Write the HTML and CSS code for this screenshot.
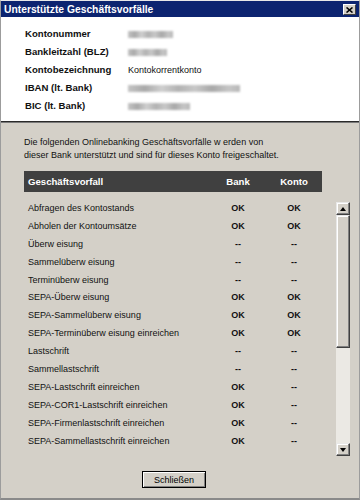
FILE: index.html
```html
<!DOCTYPE html>
<html lang="de">
<head>
<meta charset="utf-8">
<title>Unterstützte Geschäftsvorfälle</title>
<link rel="stylesheet" href="styles.css">
</head>
<body>
<div class="window">
  <div class="titlebar">
    <span class="title">Unterstützte Geschäftsvorfälle</span>
    <span class="close">
      <svg width="7" height="6" viewBox="0 0 7 6"><path d="M0.5 0.5 L6.5 5.5 M6.5 0.5 L0.5 5.5" stroke="#000" stroke-width="1.6" fill="none"/></svg>
    </span>
  </div>
  <div class="info">
    <div class="irow"><span class="label">Kontonummer</span><span class="blur w45"></span></div>
    <div class="irow"><span class="label">Bankleitzahl (BLZ)</span><span class="blur w39"></span></div>
    <div class="irow"><span class="label">Kontobezeichnung</span><span class="value">Kontokorrentkonto</span></div>
    <div class="irow"><span class="label">IBAN (lt. Bank)</span><span class="blur w112"></span></div>
    <div class="irow"><span class="label">BIC (lt. Bank)</span><span class="blur w62"></span></div>
  </div>
  <div class="content">
    <p class="desc">Die folgenden Onlinebanking Geschäftsvorfälle w erden von<br>dieser Bank unterstützt und sind für dieses Konto freigeschaltet.</p>
    <div class="thead">
      <span>Geschäftsvorfall</span><span class="c">Bank</span><span class="c">Konto</span>
    </div>
    <div class="listarea">
      <div class="rows">
        <div class="row"><span>Abfragen des Kontostands</span><b>OK</b><b>OK</b></div>
        <div class="row"><span>Abholen der Kontoumsätze</span><b>OK</b><b>OK</b></div>
        <div class="row"><span>Überw eisung</span><b>--</b><b>--</b></div>
        <div class="row"><span>Sammelüberw eisung</span><b>--</b><b>--</b></div>
        <div class="row"><span>Terminüberw eisung</span><b>--</b><b>--</b></div>
        <div class="row"><span>SEPA-Überw eisung</span><b>OK</b><b>OK</b></div>
        <div class="row"><span>SEPA-Sammelüberw eisung</span><b>OK</b><b>OK</b></div>
        <div class="row"><span>SEPA-Terminüberw eisung einreichen</span><b>OK</b><b>OK</b></div>
        <div class="row"><span>Lastschrift</span><b>--</b><b>--</b></div>
        <div class="row"><span>Sammellastschrift</span><b>--</b><b>--</b></div>
        <div class="row"><span>SEPA-Lastschrift einreichen</span><b>OK</b><b>--</b></div>
        <div class="row"><span>SEPA-COR1-Lastschrift einreichen</span><b>OK</b><b>--</b></div>
        <div class="row"><span>SEPA-Firmenlastschrift einreichen</span><b>OK</b><b>--</b></div>
        <div class="row"><span>SEPA-Sammellastschrift einreichen</span><b>OK</b><b>--</b></div>
      </div>
      <div class="scrollbar">
        <div class="sbtn"><span class="arrow up"></span></div>
        <div class="thumb"></div>
        <div class="track"></div>
        <div class="sbtn"><span class="arrow down"></span></div>
      </div>
    </div>
    <div class="btnrow"><span class="button">Schließen</span></div>
  </div>
</div>
</body>
</html>
```
FILE: styles.css
```css
html, body {
  margin: 0;
  padding: 0;
  background: #ffffff;
}
body {
  font-family: "Liberation Sans", Arial, sans-serif;
  color: #000;
}
.window {
  width: 360px;
  height: 500px;
  box-sizing: border-box;
  border-top: 1px solid #e8e8e8;
  border-left: 1px solid #9c9c9c;
  border-right: 1px solid #9c9c9c;
  border-bottom: 2px solid #8a8a8a;
  background: #d4d0c8;
  display: flex;
  flex-direction: column;
}
.titlebar {
  height: 16px;
  background: #0c2470;
  display: flex;
  align-items: center;
  justify-content: space-between;
  flex-shrink: 0;
}
.title {
  color: #fff;
  font-weight: bold;
  font-size: 10.3px;
  line-height: 14px;
  padding: 2px 0 0 3px;
}
.close {
  width: 13px;
  height: 11px;
  box-sizing: border-box;
  margin-right: 3px;
  margin-top: 1px;
  background: #d4d0c8;
  border: 1px solid;
  border-color: #fff #404040 #404040 #fff;
  display: flex;
  align-items: center;
  justify-content: center;
}
.close svg { display: block; }
.info {
  background: #fff;
  padding: 8px 0 6px 24px;
  border-bottom: 1px solid #2a2a2a;
  box-shadow: 0 1px 0 #7a7a7a;
  margin-bottom: 1px;
}
.irow {
  height: 18px;
  display: flex;
  align-items: center;
}
.label {
  width: 103px;
  font-weight: bold;
  font-size: 9.6px;
  line-height: 18px;
  color: #111;
}
.value {
  font-size: 9px;
  line-height: 18px;
  color: #111;
}
.blur {
  display: inline-block;
  height: 7px;
  background: linear-gradient(90deg, #c4c4c4 0%, #a9a9a9 15%, #cfcfcf 30%, #b2b2b2 45%, #c8c8c8 60%, #a8a8a8 75%, #c6c6c6 90%, #b8b8b8 100%);
  filter: blur(0.8px);
}
.w45 { width: 45px; }
.w39 { width: 39px; }
.w112 { width: 112px; }
.w62 { width: 62px; }
.content {
  padding: 13px 0 0 23px;
}
.desc {
  margin: 0;
  font-size: 9px;
  line-height: 12.5px;
  color: #111;
}
.thead {
  margin-top: 10px;
  width: 298px;
  height: 21px;
  box-sizing: border-box;
  padding-left: 4px;
  background: #404040;
  color: #fff;
  font-weight: bold;
  font-size: 9.6px;
  line-height: 21px;
  display: grid;
  grid-template-columns: 168px 28px 28px;
  column-gap: 28px;
}
.c { text-align: center; white-space: nowrap; display: flex; justify-content: center; }
.listarea {
  margin-top: 8px;
  display: flex;
  align-items: flex-start;
}
.rows {
  width: 298px;
}
.row {
  height: 17.9px;
  line-height: 17.9px;
  padding-left: 4px;
  font-size: 9px;
  display: grid;
  grid-template-columns: 168px 28px 28px;
  column-gap: 28px;
  color: #111;
  white-space: nowrap;
}
.row b {
  text-align: center;
  font-weight: bold;
}
.scrollbar {
  margin-left: 14px;
  margin-top: 2px;
  width: 14px;
  height: 254px;
  display: flex;
  flex-direction: column;
  background: #ebe9e4;
}
.sbtn, .thumb {
  box-sizing: border-box;
  background: #d4d0c8;
  border: 1px solid;
  border-color: #e8e8e8 #404040 #404040 #e8e8e8;
  box-shadow: inset -1px -1px 0 #808080, inset 1px 1px 0 #fff;
}
.sbtn {
  height: 13px;
  display: flex;
  align-items: center;
  justify-content: center;
  flex-shrink: 0;
}
.thumb {
  height: 133px;
  flex-shrink: 0;
}
.track { flex: 1; }
.arrow {
  width: 0;
  height: 0;
  border-left: 3.5px solid transparent;
  border-right: 3.5px solid transparent;
}
.arrow.up { border-bottom: 4px solid #000; }
.arrow.down { border-top: 4px solid #000; }
.btnrow {
  margin-top: 15px;
  padding-left: 118px;
}
.button {
  display: flex;
  align-items: center;
  justify-content: center;
  width: 64px;
  height: 17px;
  box-sizing: border-box;
  border: 1px solid #000;
  background: #d4d0c8;
  box-shadow: inset 1px 1px 0 #fff, inset -1px -1px 0 #808080;
  font-size: 9px;
  color: #000;
}
```
